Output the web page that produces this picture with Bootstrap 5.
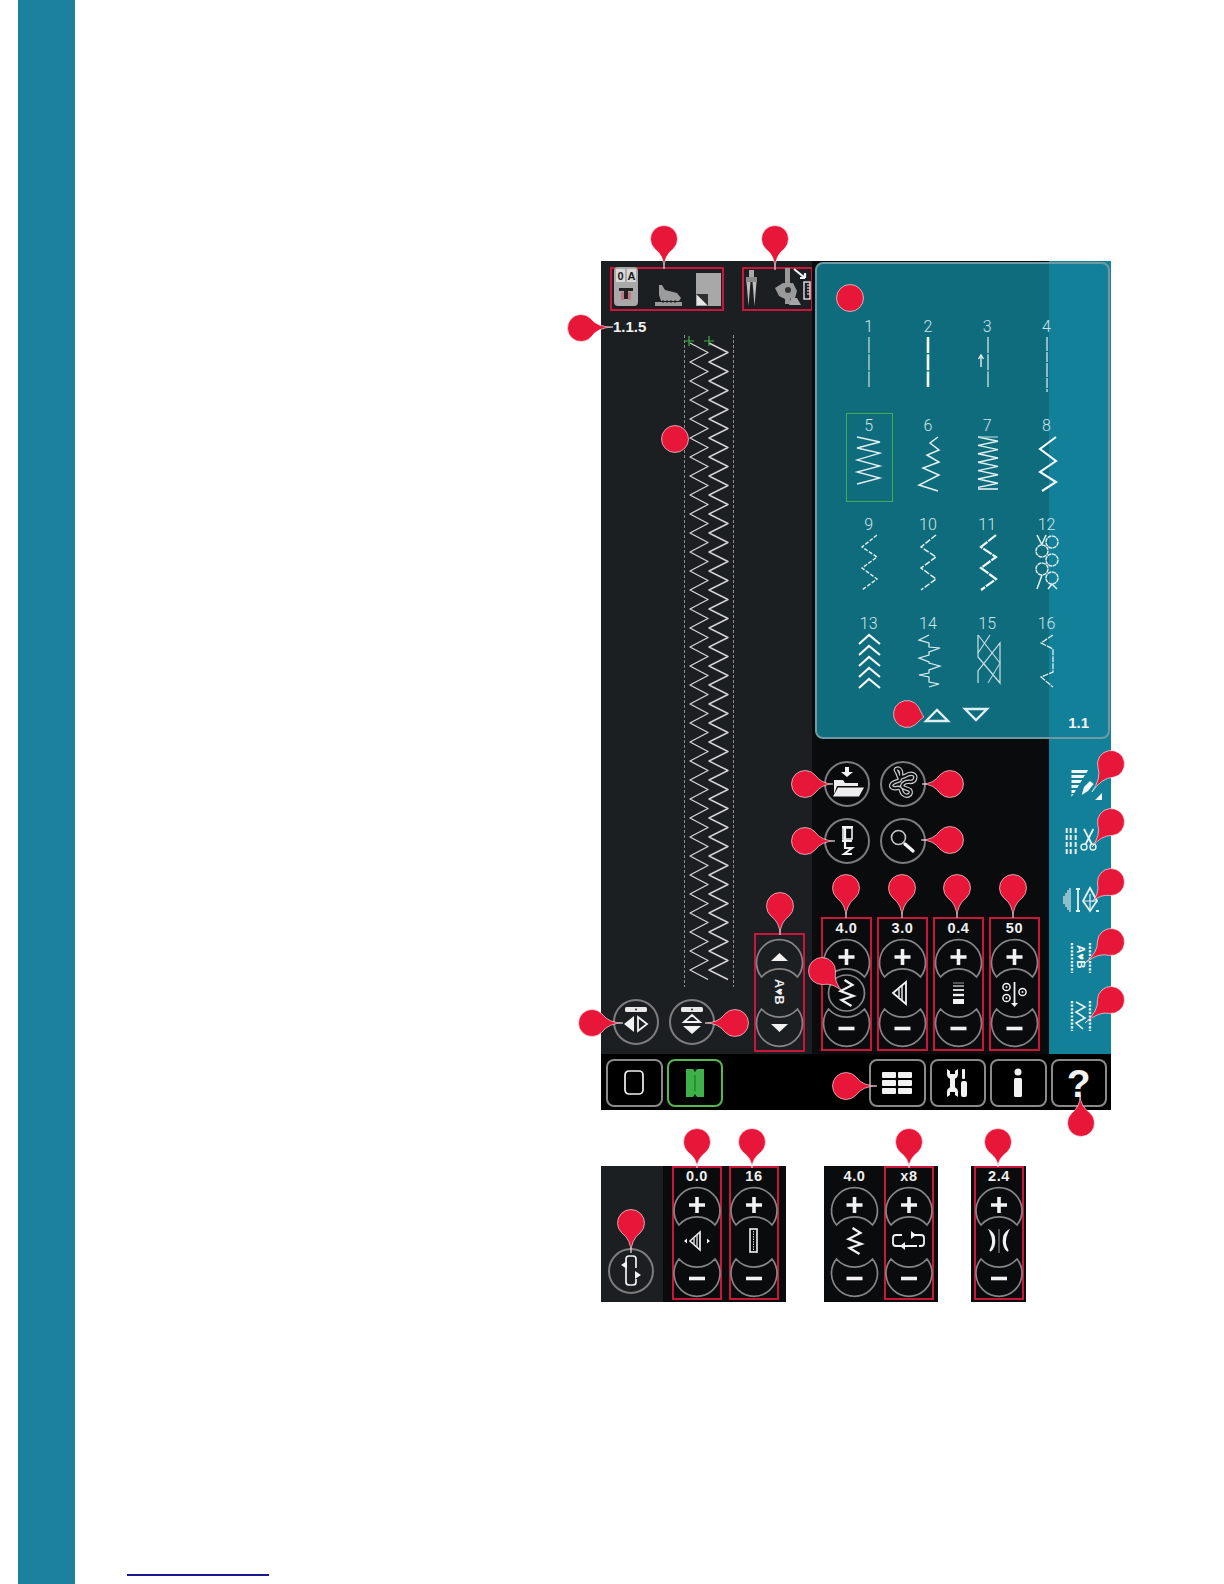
<!DOCTYPE html>
<html lang="en">

<head>
    <meta charset="UTF-8" />
    <meta name="viewport" content="width=device-width, initial-scale=1.0" />
    <title>Stitch Menu</title>
    <link rel="stylesheet" href="https://cdn.jsdelivr.net/npm/bootstrap@5.3.3/dist/css/bootstrap.min.css" />
    <style>
        body { background: #fff; font-family: "Liberation Sans", Arial, sans-serif; }
        svg { display: block; overflow: visible; flex: none; }
        .sheet { width: 1224px; height: 1584px; overflow: hidden; }
        .side-band { width: 57px; margin-left: 18px; background: #1c819d; flex: none; }
        .sheet-main { flex: 1; }
        .figure-wrap { margin: 261px 0 0 526px; }
        .foot-rule { width: 142px; height: 2px; background: #1a1a8c; margin: auto 0 8px 52px; }

        .scr { width: 510px; height: 849px; background: #000; }
        .scr-main { height: 793px; }
        .panel-left { width: 211px; background: #1c1f22; flex: none; }
        .panel-mid { width: 237px; background: #0a0b0d; flex: none; padding-left: 9px; padding-bottom: 3px; }
        .panel-rail { width: 62px; background: #13809a; flex: none; padding: 0 0 18px 13px; gap: 18px; }

        .red-box { border: 2px solid #c9163a; }
        .scr-top { padding-top: 6px; }
        .box-a { width: 114px; height: 44px; margin-left: 9px; padding: 0 1px; }
        .box-b { width: 71px; height: 44px; margin-left: 18px; padding: 0 1px; }
        .ver-label { height: 24px; padding: 7px 0 0 12px; color: #f2f2f2; font-size: 15px; font-weight: 700; line-height: 18px; }
        .zig-wrap { margin: 0 0 12px 83px; height: 652px; }
        .left-col { width: 153px; flex: none; }
        .round-row { padding-left: 12px; gap: 10px; }
        .round-btn { width: 46px; height: 46px; border: 2px solid #7c7c7c; flex: none; }
        .round-grid { margin: 0 0 53px 3px; gap: 11px 10px; grid-template-columns: 46px 46px; }
        .param-row { gap: 5px; }

        .param { width: 51px; height: 134px; }
        .param-open { border: 2px solid transparent; }
        .param-val { height: 19px; line-height: 18px; color: #f0f0f0; font-size: 14.5px; font-weight: 700; letter-spacing: .6px; }
        .param-low .param-val { height: 17px; line-height: 16px; }
        .rvb-box { width: 51px; height: 119px; padding-top: 3px; margin: 0 0 2px; }

        .pop { top: 1px; left: 214px; width: 295px; height: 477px; border: 2px solid #6f9aa4; border-radius: 8px;
            background: linear-gradient(90deg, #0f6c7d 232px, #13809a 232px); padding-top: 54px; }
        .st-grid { margin-left: 22px; grid-template-columns: repeat(4, 59.3px); grid-template-rows: 99px 99px 99px 85px; }
        .st-num { height: 18px; line-height: 18px; font-family: Roboto, "Liberation Sans", sans-serif; font-weight: 300; font-size: 16px; color: #cfe3e7; }
        .st-on::after { content: ""; position: absolute; left: 7px; top: -4px; width: 47px; height: 89px; border: 1px solid #46ad4f; }
        .pager { margin-top: 8px; padding: 0 19px 0 107px; gap: 13px; }
        .pg-num { margin-left: auto; color: #f2f2f2; font-size: 15px; font-weight: 700; padding-top: 4px; }

        .scr-bar { height: 56px; padding: 5px 3px 0 5px; gap: 4px; }
        .scr-btn { width: 56.5px; height: 48px; border: 2px solid #8a8a8a; border-radius: 8px; background: #000; color: #f2f2f2; }
        .scr-btn:hover { background: #000; border-color: #8a8a8a; color: #f2f2f2; }
        .scr-btn-on { border-color: #55b84e; }
        .scr-btn-gap { margin-left: 142px; }
        .help-mark { font-size: 39px; font-weight: 700; line-height: 1; }
        .blur-shape { filter: blur(.7px); }

        .low-row { margin-top: 56px; height: 136px; }
        .low-a { width: 185px; background: #0a0b0d; }
        .low-side { width: 62px; background: #1c1f22; padding: 0 0 8px 7px; }
        .low-boxes { padding-left: 9px; gap: 7px; }
        .low-b { width: 114px; margin-left: 38px; background: #0a0b0d; padding-left: 5px; gap: 4px; }
        .low-c { width: 55px; margin-left: 33px; background: #0a0b0d; padding-left: 3px; }
        .w-50px { width: 50px; }
        .pin-layer { pointer-events: none; }
    </style>
</head>

<body class="m-0">
    <svg width="0" height="0" class="position-absolute">
        <defs>
            <g id="cup-up-blank">
                <path d="M-18 15A23 23 0 1 1 18 15A24 24 0 0 0-18 15Z" fill="none" stroke="#858585" stroke-width="1.7" />
            </g>
            <g id="cup-down-blank">
                <path d="M-18-15A23 23 0 1 0 18-15A24 24 0 0 1-18-15Z" fill="none" stroke="#858585" stroke-width="1.7" />
            </g>
            <g id="cup-up">
                <use href="#cup-up-blank" />
                <path d="M-8-5H8M0-13V3" stroke="#f2f2f2" stroke-width="3.6" />
            </g>
            <g id="cup-down">
                <use href="#cup-down-blank" />
                <path d="M-8 4.500H8" stroke="#f2f2f2" stroke-width="3.6" />
            </g>
            <polyline id="ico-zig" points="-2,-13 6,-8 -6,-2 7,3 -5,7 5,13" fill="none" stroke="#f2f2f2" stroke-width="2.2" />
        </defs>
    </svg>

    <div class="sheet d-flex position-relative">
        <div class="side-band"></div>
        <div class="sheet-main d-flex flex-column">
            <div class="figure-wrap">
                <div class="scr position-relative d-flex flex-column">
                    <div class="scr-main d-flex">

                        <div class="panel-left d-flex flex-column">
                            <div class="scr-top d-flex">
                                <div class="red-box box-a">
                                    <svg width="108" height="40">
                                        <rect x="1" y="-2" width="24" height="39" rx="4" fill="#a9a9a9" />
                                        <rect x="3" y="0" width="9" height="13" fill="#d9d9d9" />
                                        <rect x="14" y="0" width="9" height="13" fill="#d9d9d9" />
                                        <text x="4.6" y="10.5" font-size="11" font-weight="700" fill="#1b1b1b">0</text>
                                        <text x="14.6" y="10.5" font-size="11" font-weight="700" fill="#1b1b1b">A</text>
                                        <path d="M6 19H20V22H15V30H11V22H6Z" fill="#222" />
                                        <rect x="8" y="23" width="3" height="8" fill="#bb7a85" />
                                        <rect x="15" y="23" width="3" height="8" fill="#bb7a85" />
                                        <rect x="42" y="33" width="27" height="4" fill="#999" />
                                        <path d="M46 16H49L52 21L64 24L68 29L66 32H48L46 26Z" fill="#9c9c9c" />
                                        <path d="M50 31V34M54 31V34M58 31V34M62 31V34" stroke="#1c1f22" />
                                        <rect x="83" y="4" width="25" height="33" fill="#a8a8a8" />
                                        <path d="M83 25H95V37Z" fill="#2d2f31" />
                                        <path d="M84 26L94 36H84Z" fill="#e6e6e6" />
                                    </svg>
                                </div>
                                <div class="red-box box-b">
                                    <svg width="66" height="40">
                                        <rect x="4" y="1" width="5" height="7" fill="#aaa" />
                                        <rect x="1" y="8" width="11" height="5" fill="#8b8b8b" />
                                        <path d="M1.5 13H5.5L3.500 37ZM7.500 13H11.500L9.500 37Z" fill="#bcbcbc" />
                                        <rect x="40" y="-1" width="5" height="36" fill="#999" />
                                        <path d="M30 19L38 14H48L52 22L50 29L40 30L34 27Z" fill="#9a9a9a" />
                                        <circle cx="43" cy="21" r="3" fill="#333" />
                                        <path d="M46 29H52L56 36H44Z" fill="#a6a6a6" />
                                        <path d="M49 0L60 9M60 9H55M60 9V4" stroke="#f2f2f2" stroke-width="2.2" fill="none" />
                                        <rect x="59" y="13" width="6" height="17" fill="#1c1f22" stroke="#eee" stroke-width="1.3" />
                                        <path d="M62 16H65M62 19H65M62 22H65M62 25H65" stroke="#eee" />
                                    </svg>
                                </div>
                            </div>

                            <div class="d-flex flex-grow-1">
                                <div class="left-col d-flex flex-column">
                                    <div class="ver-label">1.1.5</div>
                                    <div class="zig-wrap"><svg id="zig-preview" width="50" height="652"></svg></div>
                                    <div class="round-row d-flex">
                                        <div class="round-btn rounded-circle">
                                            <svg width="42" height="42" viewBox="2 2 42 42">
                                                <rect x="12" y="8" width="22" height="5" rx="1.5" fill="#e8e8e8" />
                                                <circle cx="23" cy="10.5" r="1" fill="#222" />
                                                <path d="M21 17L11 25L21 33Z" fill="#f2f2f2" />
                                                <path d="M25 18L34 25L25 32Z" fill="none" stroke="#f2f2f2" stroke-width="1.8" />
                                            </svg>
                                        </div>
                                        <div class="round-btn rounded-circle">
                                            <svg width="42" height="42" viewBox="2 2 42 42">
                                                <rect x="12" y="8" width="22" height="5" rx="1.5" fill="#e8e8e8" />
                                                <circle cx="23" cy="10.5" r="1" fill="#222" />
                                                <path d="M15 23L23 16L31 23Z" fill="none" stroke="#f2f2f2" stroke-width="1.8" />
                                                <path d="M14 27H32L23 35Z" fill="#f2f2f2" />
                                            </svg>
                                        </div>
                                    </div>
                                </div>
                                <div class="align-self-end red-box rvb-box d-flex justify-content-center">
                                    <svg width="47" height="110">
                                        <use href="#cup-up-blank" x="23.5" y="24" />
                                        <use href="#cup-down-blank" x="23.5" y="86" />
                                        <path d="M15 23L23.5 15L32 23Z" fill="#f2f2f2" />
                                        <path d="M15 86L23.5 94L32 86Z" fill="#f2f2f2" />
                                        <text transform="translate(19 41) rotate(90)" font-size="12.5" font-weight="700" fill="#eee">A♥B</text>
                                    </svg>
                                </div>
                            </div>
                        </div>

                        <div class="panel-mid d-flex flex-column justify-content-end">
                            <div class="round-grid d-grid">
                                <div class="round-btn rounded-circle">
                                    <svg width="42" height="42" viewBox="2 2 42 42">
                                        <path d="M21 6H25V11H29L23 16L17 11H21Z" fill="#f2f2f2" />
                                        <path d="M10 33V19H19L21 22H34V25H13L10 33Z" fill="#eee" />
                                        <path d="M14 26.5H40L35 35.5H9Z" fill="#eee" />
                                    </svg>
                                </div>
                                <div class="round-btn rounded-circle">
                                    <svg width="42" height="42" viewBox="2 2 42 42" fill="none">
                                        <path d="M17 11C13 7 20 6 21 11C22 18 18 17 25 15C31 11 37 13 35 18C33 24 27 18 23 23C20 27 27 27 30 29C33 33 27 37 23 33C20 30 22 26 17 27C12 28 9 25 13 22C17 19 22 21 19 16Z" stroke="#c8c8c8" stroke-width="4.5" />
                                        <path d="M17 11C13 7 20 6 21 11C22 18 18 17 25 15C31 11 37 13 35 18C33 24 27 18 23 23C20 27 27 27 30 29C33 33 27 37 23 33C20 30 22 26 17 27C12 28 9 25 13 22C17 19 22 21 19 16Z" stroke="#0a0b0d" stroke-width="2" />
                                    </svg>
                                </div>
                                <div class="round-btn rounded-circle">
                                    <svg width="42" height="42" viewBox="2 2 42 42" fill="none" stroke="#f2f2f2">
                                        <rect x="19" y="10" width="9" height="11" stroke-width="1.6" />
                                        <path d="M18 9H29M21 9V30M18 23H28" stroke-width="2.2" />
                                        <path d="M20 30H28L20 36H28" stroke-width="2" />
                                    </svg>
                                </div>
                                <div class="round-btn rounded-circle">
                                    <svg width="42" height="42" viewBox="2 2 42 42" fill="none">
                                        <circle cx="18.5" cy="19.5" r="7" stroke="#c8c8c8" stroke-width="1.6" />
                                        <path d="M25 26L33 33" stroke="#f2f2f2" stroke-width="3.4" stroke-linecap="round" />
                                    </svg>
                                </div>
                            </div>

                            <div class="param-row d-flex">
                                <div class="param red-box d-flex flex-column align-items-center">
                                    <div class="param-val">4.0</div>
                                    <svg width="47" height="110">
                                        <use href="#cup-up" x="23.5" y="24" />
                                        <use href="#cup-down" x="23.5" y="86" />
                                        <circle cx="23.5" cy="55" r="18" fill="#0a0b0d" stroke="#858585" stroke-width="1.7" />
                                        <use href="#ico-zig" x="23.5" y="55" />
                                    </svg>
                                </div>
                                <div class="param red-box d-flex flex-column align-items-center">
                                    <div class="param-val">3.0</div>
                                    <svg width="47" height="110">
                                        <use href="#cup-up" x="23.5" y="24" />
                                        <use href="#cup-down" x="23.5" y="86" />
                                        <path d="M14 55L27 44V66Z" fill="none" stroke="#f2f2f2" stroke-width="1.8" />
                                        <path d="M23 48V62M20 51V59" stroke="#f2f2f2" stroke-width="1.4" />
                                    </svg>
                                </div>
                                <div class="param red-box d-flex flex-column align-items-center">
                                    <div class="param-val">0.4</div>
                                    <svg width="47" height="110">
                                        <use href="#cup-up" x="23.5" y="24" />
                                        <use href="#cup-down" x="23.5" y="86" />
                                        <path d="M18 45H29" stroke="#9a9a9a" />
                                        <path d="M18 48H29" stroke="#c8c8c8" stroke-width="1.4" />
                                        <path d="M18 52H29" stroke="#eee" stroke-width="1.8" />
                                        <path d="M18 57H29" stroke="#f2f2f2" stroke-width="2.4" />
                                        <rect x="18" y="61" width="11" height="5" fill="#f2f2f2" />
                                    </svg>
                                </div>
                                <div class="param red-box d-flex flex-column align-items-center">
                                    <div class="param-val">50</div>
                                    <svg width="47" height="110" fill="none" stroke="#f2f2f2">
                                        <use href="#cup-up" x="23.5" y="24" />
                                        <use href="#cup-down" x="23.5" y="86" />
                                        <circle cx="15.5" cy="49" r="3.6" stroke-width="1.5" />
                                        <circle cx="15.5" cy="60" r="3.6" stroke-width="1.5" />
                                        <circle cx="31.5" cy="54" r="3.6" stroke-width="1.5" />
                                        <circle cx="15.5" cy="49" r="1" fill="#f2f2f2" stroke="none" />
                                        <circle cx="15.5" cy="60" r="1" fill="#f2f2f2" stroke="none" />
                                        <circle cx="31.5" cy="54" r="1" fill="#f2f2f2" stroke="none" />
                                        <path d="M23.5 44V67" stroke-width="1.8" />
                                        <path d="M20 65L23.5 69L27 65Z" fill="#f2f2f2" stroke="none" />
                                    </svg>
                                </div>
                            </div>
                        </div>

                        <div class="panel-rail d-flex flex-column justify-content-end">
                            <svg width="44" height="40">
                                <path d="M9.5 6H26L24.5 9H9.5ZM9.5 11H23L21.2 14H9.5ZM9.5 16H20L18.2 19H9.5ZM9.5 21H17L15.2 24H9.5ZM9.5 26H14L12.2 29H9.5ZM9.5 30H11.5L9.5 33Z" fill="#f4f8f9" />
                                <path d="M19.7 31L22 23L28 17L31.7 20L26 27Z" fill="#f4f8f9" />
                                <path d="M33 36H40V29Z" fill="#f4f8f9" />
                            </svg>
                            <svg width="44" height="40" fill="none" stroke="#e8f2f4">
                                <path d="M4.7 6V33M8.7 6V33M13.7 6V33" stroke-width="2" stroke-dasharray="5 2" />
                                <path d="M22 7L29.7 22M31.3 7L23.7 22" stroke-width="1.8" />
                                <circle cx="22" cy="25" r="3" stroke-width="1.4" />
                                <circle cx="31" cy="25" r="3" stroke-width="1.4" />
                            </svg>
                            <svg width="44" height="40" fill="none" stroke="#e8f2f4">
                                <path d="M8 8V32M6 10V30M4 13V27M2 16V24" stroke-width="1.3" stroke="#cfe2e6" />
                                <path d="M16 9V31M14 9H18M14 31H18" stroke-width="1.8" />
                                <path d="M28 8L21 21L28 31L35 21Z" stroke-width="1.8" />
                                <path d="M21 21L35 21M28 14V30" stroke-width="1.2" />
                                <rect x="34" y="30" width="3" height="2" fill="#e8f2f4" stroke="none" />
                            </svg>
                            <svg width="44" height="40" fill="none" stroke="#e8f2f4">
                                <path d="M10 5V35M28 5V35" stroke-width="2.4" stroke-dasharray="2.2 1.4" />
                                <text transform="translate(14.5 7) rotate(90)" font-size="11.5" font-weight="700" fill="#f2f7f8" stroke="none">A♥B</text>
                            </svg>
                            <svg width="44" height="40" fill="none" stroke="#e8f2f4">
                                <path d="M10 5V35M28 5V35" stroke-width="2.4" stroke-dasharray="2.2 1.4" />
                                <polyline points="14,6 23,11 14,16 23,22 14,27 21,33" stroke-width="1.6" />
                            </svg>
                        </div>
                    </div>

                    <div class="scr-bar d-flex">
                        <button class="btn scr-btn p-0 d-flex align-items-center justify-content-center">
                            <svg width="22" height="26">
                                <rect x="2" y="1" width="18" height="23" rx="4" fill="none" stroke="#f2f2f2" stroke-width="1.7" />
                            </svg>
                        </button>
                        <button class="btn scr-btn scr-btn-on p-0 d-flex align-items-center justify-content-center">
                            <svg class="blur-shape" width="22" height="30">
                                <path d="M2 1H9L11 4L13 1H20V29H13L11 26L9 29H2Z" fill="#3eb149" />
                                <path d="M11 7V23" stroke="#2b8f37" stroke-width="2" />
                            </svg>
                        </button>
                        <button class="btn scr-btn scr-btn-gap p-0 d-flex align-items-center justify-content-center">
                            <svg width="32" height="26" fill="#f2f2f2">
                                <rect x="1" y="2" width="14" height="6" rx="1" /><rect x="17" y="2" width="14" height="6" rx="1" />
                                <rect x="1" y="10" width="14" height="6" rx="1" /><rect x="17" y="10" width="14" height="6" rx="1" />
                                <rect x="1" y="18" width="14" height="6" rx="1" /><rect x="17" y="18" width="14" height="6" rx="1" />
                            </svg>
                        </button>
                        <button class="btn scr-btn p-0 d-flex align-items-center justify-content-center">
                            <svg width="24" height="30" fill="#f2f2f2">
                                <rect x="4" y="6" width="5" height="18" />
                                <path d="M1 1V6C1 9 3 11 6.5 11C10 11 12 9 12 6V1L9 3V6H4V3Z" />
                                <path d="M1 29V24C1 21 3 19 6.5 19C10 19 12 21 12 24V29L9 27V24H4V27Z" />
                                <rect x="16" y="1" width="3" height="10" rx="1" />
                                <rect x="15" y="13" width="6" height="16" rx="2" />
                            </svg>
                        </button>
                        <button class="btn scr-btn p-0 d-flex align-items-center justify-content-center">
                            <svg width="12" height="30" fill="#f2f2f2">
                                <circle cx="6" cy="4" r="3.5" />
                                <rect x="2" y="10" width="8" height="19" rx="1.5" />
                            </svg>
                        </button>
                        <button class="btn scr-btn p-0 d-flex align-items-center justify-content-center help-mark">?</button>
                    </div>

                    <div class="pop position-absolute d-flex flex-column">
                        <div id="stitch-grid" class="st-grid d-grid"></div>
                        <div class="pager d-flex">
                            <svg width="26" height="14"><path d="M2 13L13 2L24 13Z" fill="none" stroke="#dfeef0" stroke-width="2.4" /></svg>
                            <svg width="26" height="14"><path d="M2 1L13 12L24 1Z" fill="none" stroke="#dfeef0" stroke-width="2.4" /></svg>
                            <div class="pg-num">1.1</div>
                        </div>
                    </div>
                </div>

                <div class="low-row d-flex">
                    <div class="low-a d-flex">
                        <div class="low-side d-flex align-items-end">
                            <div class="round-btn rounded-circle">
                                <svg width="42" height="42" viewBox="2 2 42 42" fill="none" stroke="#f2f2f2" stroke-width="1.7">
                                    <path d="M18 15V11Q18 8 21 8H25Q28 8 28 11V20" />
                                    <path d="M18 20V34Q18 37 21 37H25Q28 37 28 34V31" />
                                    <path d="M13 17L19 13V21Z" fill="#f2f2f2" stroke="none" />
                                    <path d="M33 27L27 23V31Z" fill="#f2f2f2" stroke="none" />
                                </svg>
                            </div>
                        </div>
                        <div class="low-boxes d-flex">
                            <div class="param param-low w-50px red-box d-flex flex-column align-items-center">
                                <div class="param-val">0.0</div>
                                <svg width="46" height="113">
                                    <use href="#cup-up" x="23" y="25" />
                                    <use href="#cup-down" x="23" y="89" />
                                    <path d="M16 56L26 47V65Z" fill="none" stroke="#f2f2f2" stroke-width="1.6" />
                                    <path d="M20 52V60M23 50V62M26 47V65" stroke="#d8d8d8" stroke-width="1.4" />
                                    <path d="M10 56L13 53.5V58.5ZM36 56L33 53.5V58.5Z" fill="#f2f2f2" />
                                </svg>
                            </div>
                            <div class="param param-low w-50px red-box d-flex flex-column align-items-center">
                                <div class="param-val">16</div>
                                <svg width="46" height="113">
                                    <use href="#cup-up" x="23" y="25" />
                                    <use href="#cup-down" x="23" y="89" />
                                    <rect x="19" y="44" width="7" height="23" fill="none" stroke="#f2f2f2" stroke-width="1.6" />
                                    <path d="M22.5 46V65" stroke="#cfcfcf" stroke-dasharray="1.5 1" />
                                </svg>
                            </div>
                        </div>
                    </div>

                    <div class="low-b d-flex">
                        <div class="param param-low param-open d-flex flex-column align-items-center">
                            <div class="param-val">4.0</div>
                            <svg width="47" height="113">
                                <use href="#cup-up" x="23.5" y="25" />
                                <use href="#cup-down" x="23.5" y="89" />
                                <use href="#ico-zig" x="23.5" y="56" />
                            </svg>
                        </div>
                        <div class="param param-low w-50px red-box d-flex flex-column align-items-center">
                            <div class="param-val">x8</div>
                            <svg width="46" height="113" fill="none" stroke="#f2f2f2">
                                <use href="#cup-up" x="23" y="25" />
                                <use href="#cup-down" x="23" y="89" />
                                <path d="M16 50H10Q7 50 7 53V58Q7 61 10 61H31" stroke-width="1.8" />
                                <path d="M28 50H35Q38 50 38 53V58Q38 61 35 61H33" stroke-width="1.8" />
                                <path d="M30 50L25 46V54ZM14 61L19 57V65Z" fill="#f2f2f2" stroke="none" />
                            </svg>
                        </div>
                    </div>

                    <div class="low-c">
                        <div class="param param-low w-50px red-box d-flex flex-column align-items-center">
                            <div class="param-val">2.4</div>
                            <svg width="46" height="113" fill="none" stroke="#f2f2f2">
                                <use href="#cup-up" x="23" y="25" />
                                <use href="#cup-down" x="23" y="89" />
                                <path d="M14 46C20 50 20 62 14 66C18 60 17 52 14 46Z" stroke-width="1.6" fill="#f2f2f2" />
                                <path d="M32 46C26 50 26 62 32 66C28 60 29 52 32 46Z" stroke-width="1.6" fill="#f2f2f2" />
                                <path d="M23 44V68" stroke="#9a9a9a" />
                            </svg>
                        </div>
                    </div>
                </div>
            </div>
            <div class="foot-rule"></div>
        </div>

        <svg id="pins" class="pin-layer position-absolute top-0 start-0" width="1224" height="1584"></svg>
    </div>

    <script>
        // zigzag preview, two columns of the selected stitch
        function zigColumn(x1, x2) {
            const pts = [];
            for (let i = 0; i < 68; i++) {
                pts.push(`${i % 2 ? x2 : x1},${8 + i * 9.5}`);
            }
            return `<polyline points="${pts.join(' ')}" fill="none" stroke="#d4d4d4" stroke-width="1.4" stroke-linejoin="round" />`;
        }
        document.getElementById('zig-preview').innerHTML = `
            <path d="M.5 0V652M49.5 0V652" stroke="#8f8f8f" stroke-dasharray="3 2" />
            ${zigColumn(6, 24)}${zigColumn(25, 44)}
            <path d="M0 6H10M5 1V11M20 6H30M25 1V11" stroke="#3fae49" stroke-width="1.2" />`;

        // stitch menu: offsets are from the middle of each cell
        const line = (pts, width = 1.3, dash = '', color = '#e4f0f2') =>
            `<polyline points="${pts.map(p => (p[0] + 30) + ',' + p[1]).join(' ')}" fill="none" stroke="${color}" stroke-width="${width}" stroke-dasharray="${dash}" />`;

        const denseZig = [];
        for (let i = 0; i < 13; i++) denseZig.push([i % 2 ? 10 : -10, 2 + i * 4.2]);

        const chevrons = [2, 13, 24, 35, 46].map(y => line([[-10, y + 9], [0, y], [11, y + 9]], 2.1, '', '#f4f8f9')).join('');

        const honeycomb = [[5, 8], [-5, 17], [5, 26], [-5, 35], [5, 44]].map(c =>
            `<circle cx="${c[0] + 30}" cy="${c[1]}" r="6" fill="none" stroke="#dcebed" stroke-width="1.5" stroke-dasharray="4 .6" />`).join('')
            + line([[-10, 1], [-5, 11]], 1.5) + line([[-1, 1], [-5, 10]], 1.5)
            + line([[-10, 55], [-5, 41]], 1.5) + line([[1, 55], [5, 50]], 1.5) + line([[10, 55], [5, 50]], 1.5);

        const stitches = [
            line([[0, 1], [0, 51]], 1.2, '16 1.2', '#cfe3e7'),
            line([[0, 1], [0, 51]], 2.6, '16 1.2', '#f4f8f9'),
            line([[0, 1], [0, 51]], 1.6, '16 1.2', '#a8cdd3') + line([[-7, 31], [-7, 20]], 1.3, '', '#f4f8f9') + line([[-9.5, 23], [-7, 19], [-4.5, 23]], 1.2, '', '#f4f8f9'),
            line([[0, 1], [0, 56]], 1.2, '14 1 10 1', '#e4f0f2'),
            line([[-12, 2], [11, 7], [-12, 13], [11, 18], [-12, 25], [11, 31], [-12, 37], [11, 43], [-12, 49]], 1.3),
            line([[10, 2], [2, 8], [11, 15], [-1, 20], [11, 27], [-5, 33], [11, 40], [-9, 50], [10, 56]], 1.5),
            line(denseZig, 1.4) + line([[-10, 2], [10, 2]], 1.2, '', '#a8cdd3') + line([[-10, 54], [10, 54]], 1.6),
            line([[9, 2], [-7, 14], [9, 26], [-7, 37], [9, 47], [-5, 56]], 2.1, '', '#f4f8f9'),
            line([[8, 1], [-7, 13], [8, 23], [-7, 34], [8, 45], [-7, 56]], 1.4, '4 1.5'),
            line([[8, 1], [-7, 13], [8, 23], [-7, 34], [8, 45], [-7, 56]], 1.5, '6 1.5'),
            line([[8, 1], [-7, 13], [8, 23], [-7, 34], [8, 45], [-7, 56]], 2.2, '10 1', '#f4f8f9'),
            honeycomb,
            chevrons,
            line([[1, 2], [-9, 7], [1, 10], [1, 14], [12, 15], [1, 19], [1, 22], [-9, 25], [1, 29], [1, 30], [12, 33], [1, 37], [1, 40], [-9, 42], [1, 44], [1, 49], [11, 51], [1, 54]], 1.2),
            line([[-10, 2], [-10, 24], [12, 50], [12, 10], [-10, 38], [-10, 50]], 1.2, '', '#cfe3e7') + line([[-10, 2], [12, 30]], 1.1, '', '#cfe3e7') + line([[2, 2], [-10, 20]], 1.1, '', '#cfe3e7') + line([[12, 30], [0, 50]], 1.2, '', '#a8cdd3'),
            line([[6, 2], [-6, 10], [6, 16], [6, 39], [-6, 44], [6, 54]], 1.3, '6 1')
        ];

        const grid = document.getElementById('stitch-grid');
        stitches.forEach((drawing, i) => {
            const cell = document.createElement('div');
            cell.className = 'position-relative text-center' + (i === 4 ? ' st-on' : '');
            cell.innerHTML = `<div class="st-num">${i + 1}</div><svg width="60" height="60">${drawing}</svg>`;
            grid.appendChild(cell);
        });

        // callout pins: centre x, centre y, tip x, tip y
        const pinData = [
            [664, 239, 664, 269], [775, 239, 775, 270], [581, 328, 613, 327], [675, 439],
            [850, 298], [907, 714, 924, 717],
            [805, 784, 833, 784], [950, 784, 922, 784], [805, 841, 835, 841], [950, 840, 921, 840],
            [846, 888, 846, 918], [902, 888, 902, 918], [957, 888, 957, 918], [1013, 888, 1013, 918],
            [822, 971, 843, 992], [780, 906, 780, 935],
            [592, 1023, 623, 1023], [735, 1023, 705, 1023],
            [1111, 764, 1092, 792], [1111, 822, 1092, 847], [1111, 882, 1092, 902], [1111, 942, 1085, 963], [1111, 1000, 1085, 1023],
            [846, 1086, 877, 1086], [1081, 1123, 1080, 1095],
            [697, 1142, 697, 1168], [752, 1142, 752, 1168], [631, 1223, 631, 1253], [909, 1142, 909, 1168], [998, 1142, 998, 1167]
        ];
        const r = 13.5;
        document.getElementById('pins').innerHTML = pinData.map(([cx, cy, tx, ty]) => {
            if (tx === undefined) {
                return `<circle cx="${cx}" cy="${cy}" r="${r}" fill="#e8173a" stroke="#fff" stroke-width=".6" />`;
            }
            const a = Math.atan2(ty - cy, tx - cx);
            const d = 0.75;
            const b1 = [cx + r * Math.cos(a + d), cy + r * Math.sin(a + d)];
            const b2 = [cx + r * Math.cos(a - d), cy + r * Math.sin(a - d)];
            const mx = cx + (r + 3) * Math.cos(a);
            const my = cy + (r + 3) * Math.sin(a);
            return `<path d="M${b1[0]} ${b1[1]}A${r} ${r} 0 1 1 ${b2[0]} ${b2[1]}Q${mx} ${my} ${tx} ${ty}Q${mx} ${my} ${b1[0]} ${b1[1]}Z" fill="#e8173a" stroke="#fff" stroke-width=".6" />`;
        }).join('');
    </script>

    <script src="https://cdn.jsdelivr.net/npm/bootstrap@5.3.3/dist/js/bootstrap.bundle.min.js"></script>
</body>

</html>
